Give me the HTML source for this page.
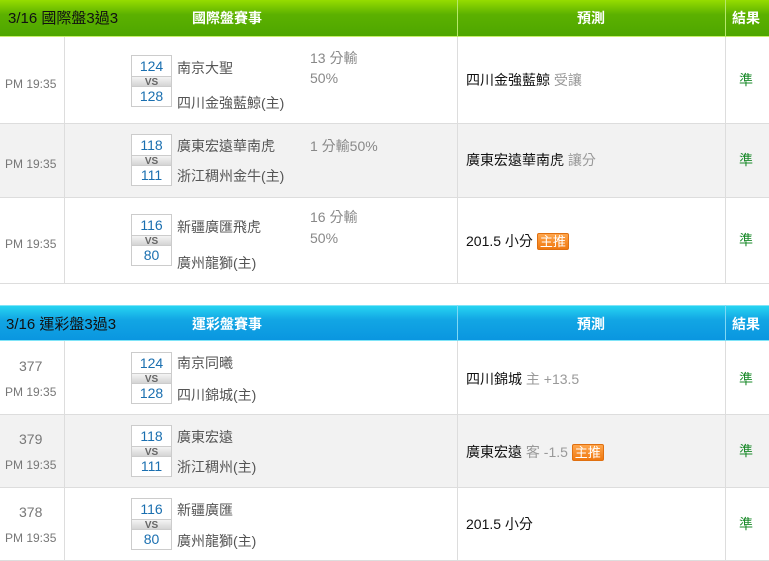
<!DOCTYPE html>
<html><head><meta charset="utf-8"><style>
*{margin:0;padding:0;box-sizing:border-box}
body{width:769px;height:561px;background:#fff;position:relative;overflow:hidden;font-family:"Liberation Sans","Noto Sans CJK TC",sans-serif;}
.a{position:absolute;white-space:nowrap;line-height:1}
.hg{background:linear-gradient(#96dc00,#5cb100 40%,#4ea600);}
.hb{background:linear-gradient(#27d4f2,#12a6e4 40%,#0a96e0);}
.ht{color:#fff;font-weight:bold;font-size:14px}
.row{position:absolute;left:0;width:769px;border-bottom:1px solid #ddd}
.g{background:#f2f2f2}
.vl{position:absolute;top:0;bottom:0;width:1px;background:#ddd}
.box{position:absolute;left:131px;width:41px;border:1px solid #ccc;background:#fff}
.box div{text-align:center;color:#1a6fb0;font-size:14px}
.box .vs{height:11px;line-height:11px;font-size:10px;color:#666;font-weight:bold;background:linear-gradient(#f4f4f4,#d4d4d4);border-top:1px solid #ccc;border-bottom:1px solid #ccc}
.tm{font-size:12px;color:#777}
.tn{font-size:14px;color:#555}
.hc{font-size:14px;color:#888}
.pr{font-size:14px;color:#111}
.pr span{color:#999}
.ok{font-size:14px;color:#1a8a2a}
.pr .tag{display:inline-block;background:linear-gradient(#ffa64d,#f07810);color:#fff;font-size:13px;line-height:15px;height:17px;padding:0 2px;border:1px solid #e07010;border-radius:2px;vertical-align:0px}
</style></head><body>

<div class="a hg" style="left:0;top:0;width:769px;height:37px;border-bottom:1px solid #c8f06a"></div>
<div class="vl" style="left:457px;top:0;height:37px;background:#b6e86a"></div>
<div class="vl" style="left:725px;top:0;height:37px;background:#b6e86a"></div>
<div class="a" style="left:8px;top:11px;font-size:15px;color:#111">3/16 國際盤3過3</div>
<div class="a ht" style="left:192px;top:11px">國際盤賽事</div>
<div class="a ht" style="left:577px;top:11px">預測</div>
<div class="a ht" style="left:732px;top:11px">結果</div>

<div class="row" style="top:37px;height:87px"></div>
<div class="row g" style="top:123px;height:75px;border-top:1px solid #ddd"></div>
<div class="row" style="top:197px;height:87px"></div>
<div class="vl" style="left:64px;top:37px;height:247px"></div>
<div class="vl" style="left:457px;top:37px;height:247px"></div>
<div class="vl" style="left:725px;top:37px;height:247px"></div>

<div class="a tm" style="left:5px;top:78px">PM 19:35</div>
<div class="box" style="top:55px"><div style="height:20px;line-height:20px">124</div><div class="vs">VS</div><div style="height:19px;line-height:19px">128</div></div>
<div class="a tn" style="left:177px;top:61px">南京大聖</div>
<div class="a tn" style="left:177px;top:96px">四川金強藍鯨(主)</div>
<div class="a hc" style="left:310px;top:51px">13 分輸</div>
<div class="a hc" style="left:310px;top:71px">50%</div>
<div class="a pr" style="left:466px;top:73px">四川金強藍鯨 <span>受讓</span></div>
<div class="a ok" style="left:739px;top:73px">準</div>

<div class="a tm" style="left:5px;top:158px">PM 19:35</div>
<div class="box" style="top:134px"><div style="height:20px;line-height:20px">118</div><div class="vs">VS</div><div style="height:19px;line-height:19px">111</div></div>
<div class="a tn" style="left:177px;top:139px">廣東宏遠華南虎</div>
<div class="a tn" style="left:177px;top:169px">浙江稠州金牛(主)</div>
<div class="a hc" style="left:310px;top:139px">1 分輸50%</div>
<div class="a pr" style="left:466px;top:153px">廣東宏遠華南虎 <span>讓分</span></div>
<div class="a ok" style="left:739px;top:153px">準</div>

<div class="a tm" style="left:5px;top:238px">PM 19:35</div>
<div class="box" style="top:214px"><div style="height:20px;line-height:20px">116</div><div class="vs">VS</div><div style="height:19px;line-height:19px">80</div></div>
<div class="a tn" style="left:177px;top:220px">新疆廣匯飛虎</div>
<div class="a tn" style="left:177px;top:256px">廣州龍獅(主)</div>
<div class="a hc" style="left:310px;top:210px">16 分輸</div>
<div class="a hc" style="left:310px;top:231px">50%</div>
<div class="a pr" style="left:466px;top:233px">201.5 小分 <span class="tag">主推</span></div>
<div class="a ok" style="left:739px;top:233px">準</div>

<div class="a hb" style="left:0;top:305px;width:769px;height:36px;border-top:1px solid #7fe4f8;border-bottom:1px solid #7fe4f8"></div>
<div class="vl" style="left:457px;top:305px;height:36px;background:#7fd8f4"></div>
<div class="vl" style="left:725px;top:305px;height:36px;background:#7fd8f4"></div>
<div class="a" style="left:6px;top:317px;font-size:15px;color:#111">3/16 運彩盤3過3</div>
<div class="a ht" style="left:192px;top:317px">運彩盤賽事</div>
<div class="a ht" style="left:577px;top:317px">預測</div>
<div class="a ht" style="left:732px;top:317px">結果</div>

<div class="row" style="top:341px;height:74px"></div>
<div class="row g" style="top:414px;height:74px;border-top:1px solid #ddd"></div>
<div class="row" style="top:487px;height:74px"></div>
<div class="vl" style="left:64px;top:341px;height:220px"></div>
<div class="vl" style="left:457px;top:341px;height:220px"></div>
<div class="vl" style="left:725px;top:341px;height:220px"></div>

<div class="a" style="left:19px;top:359px;font-size:14px;color:#777">377</div>
<div class="a tm" style="left:5px;top:386px">PM 19:35</div>
<div class="box" style="top:352px"><div style="height:20px;line-height:20px">124</div><div class="vs">VS</div><div style="height:19px;line-height:19px">128</div></div>
<div class="a tn" style="left:177px;top:356px">南京同曦</div>
<div class="a tn" style="left:177px;top:388px">四川錦城(主)</div>
<div class="a pr" style="left:466px;top:372px">四川錦城 <span>主 +13.5</span></div>
<div class="a ok" style="left:739px;top:372px">準</div>

<div class="a" style="left:19px;top:432px;font-size:14px;color:#777">379</div>
<div class="a tm" style="left:5px;top:459px">PM 19:35</div>
<div class="box" style="top:425px"><div style="height:20px;line-height:20px">118</div><div class="vs">VS</div><div style="height:19px;line-height:19px">111</div></div>
<div class="a tn" style="left:177px;top:430px">廣東宏遠</div>
<div class="a tn" style="left:177px;top:460px">浙江稠州(主)</div>
<div class="a pr" style="left:466px;top:444px">廣東宏遠 <span>客 -1.5</span> <span class="tag">主推</span></div>
<div class="a ok" style="left:739px;top:444px">準</div>

<div class="a" style="left:19px;top:505px;font-size:14px;color:#777">378</div>
<div class="a tm" style="left:5px;top:532px">PM 19:35</div>
<div class="box" style="top:498px"><div style="height:20px;line-height:20px">116</div><div class="vs">VS</div><div style="height:19px;line-height:19px">80</div></div>
<div class="a tn" style="left:177px;top:503px">新疆廣匯</div>
<div class="a tn" style="left:177px;top:534px">廣州龍獅(主)</div>
<div class="a pr" style="left:466px;top:517px">201.5 小分</div>
<div class="a ok" style="left:739px;top:517px">準</div>
</body></html>
